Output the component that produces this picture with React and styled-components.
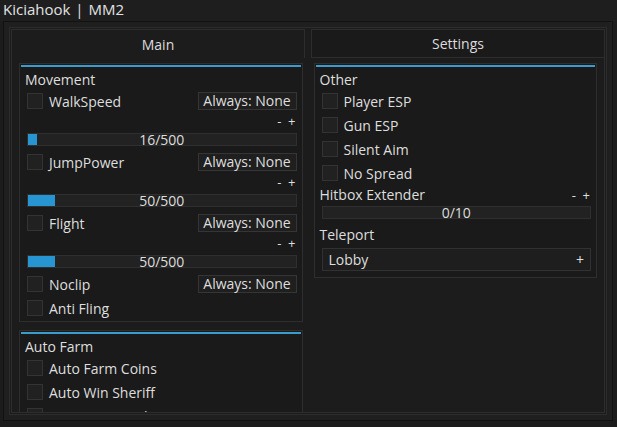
import styled, { createGlobalStyle } from 'styled-components';

const Global = createGlobalStyle`
  html, body { margin: 0; padding: 0; background: #1c1c1c; }
  body { font-family: "Open Sans", "Noto Sans", sans-serif; color: #dedede; }
  * { box-sizing: border-box; }
`;

const movement = [
  { type: 'toggle', label: 'WalkSpeed', bind: true },
  { type: 'keys' },
  { type: 'slider', value: 16, max: 500 },
  { type: 'toggle', label: 'JumpPower', bind: true },
  { type: 'keys' },
  { type: 'slider', value: 50, max: 500 },
  { type: 'toggle', label: 'Flight', bind: true },
  { type: 'keys' },
  { type: 'slider', value: 50, max: 500 },
  { type: 'toggle', label: 'Noclip', bind: true },
  { type: 'toggle', label: 'Anti Fling' },
];

const autoFarm = [
  { type: 'toggle', label: 'Auto Farm Coins' },
  { type: 'toggle', label: 'Auto Win Sheriff' },
  { type: 'toggle', label: 'Auto Win Murder' },
];

const other = [
  { type: 'toggle', label: 'Player ESP' },
  { type: 'toggle', label: 'Gun ESP' },
  { type: 'toggle', label: 'Silent Aim' },
  { type: 'toggle', label: 'No Spread' },
  { type: 'label', label: 'Hitbox Extender', keys: true },
  { type: 'slider', value: 0, max: 10, tight: true },
  { type: 'label', label: 'Teleport', spaced: true },
  { type: 'dropdown', value: 'Lobby' },
];

function Item({ item }) {
  if (item.type === 'toggle') {
    return (
      <ToggleRow>
        <Check />
        <Label>{item.label}</Label>
        {item.bind && <Bind>Always: None</Bind>}
      </ToggleRow>
    );
  }
  if (item.type === 'keys') {
    return <KeysRow>-&nbsp;&nbsp;+</KeysRow>;
  }
  if (item.type === 'slider') {
    return (
      <SliderRow tight={item.tight}>
        <Track>
          <Fill style={{ width: `${(item.value / item.max) * 100}%` }} />
          <TrackText>{item.value}/{item.max}</TrackText>
        </Track>
      </SliderRow>
    );
  }
  if (item.type === 'label') {
    return (
      <LabelRow spaced={item.spaced}>
        <span>{item.label}</span>
        {item.keys && <Keys>-&nbsp;&nbsp;+</Keys>}
      </LabelRow>
    );
  }
  return (
    <DropRow>
      <Drop>
        <span>{item.value}</span>
        <span>+</span>
      </Drop>
    </DropRow>
  );
}

function Section({ title, items }) {
  return (
    <Panel>
      <Title>{title}</Title>
      {items.map((it, i) => <Item key={i} item={it} />)}
    </Panel>
  );
}

export default function App() {
  return (
    <Window>
      <Global />
      <TitleBar>Kiciahook | MM2</TitleBar>
      <Frame>
        <Inner>
          <Tabs>
            <Tab active>Main</Tab>
            <Tab>Settings</Tab>
          </Tabs>
          <Content>
            <Column>
              <Section title="Movement" items={movement} />
              <Section title="Auto Farm" items={autoFarm} />
            </Column>
            <Column>
              <Section title="Other" items={other} />
            </Column>
          </Content>
        </Inner>
      </Frame>
    </Window>
  );
}

const Window = styled.div`
  width: 617px;
  height: 427px;
  background: #1c1c1c;
  display: flex;
  flex-direction: column;
  overflow: hidden;
`;

const TitleBar = styled.div`
  height: 21px;
  padding-left: 3px;
  font-size: 15px;
  line-height: 19px;
  color: #e2e2e2;
  background: #1e1e1e;
  word-spacing: 1px;
`;

const Frame = styled.div`
  margin-left: 3px;
  width: 610px;
  height: 400px;
  border: 1px solid #121212;
  background: #1f1f1f;
  padding: 5px;
`;

const Inner = styled.div`
  height: 100%;
  border: 1px solid #2c2c2c;
  background: #1c1c1c;
  padding: 1px;
  display: flex;
  flex-direction: column;
`;

const Tabs = styled.div`
  display: flex;
  gap: 6px;
  height: 29px;
`;

const Tab = styled.div`
  flex: 1;
  display: flex;
  align-items: center;
  justify-content: center;
  font-size: 14px;
  color: #dcdcdc;
  background: ${p => (p.active ? '#1c1c1c' : '#1a1a1a')};
  border: 1px solid #2d2d2d;
  border-bottom: ${p => (p.active ? 'none' : '1px solid #2d2d2d')};
`;

const Content = styled.div`
  flex: 1;
  display: flex;
  gap: 11px;
  padding: 5px 7px 0 7px;
  border: 1px solid #2d2d2d;
  border-top: none;
  overflow: hidden;
  min-height: 0;
`;

const Column = styled.div`
  flex: 1;
  display: flex;
  flex-direction: column;
  gap: 8px;
  min-width: 0;
`;

const Panel = styled.div`
  background: #1a1a1a;
  border: 1px solid #2e2e2e;
  padding: 1px 5px 1px 7px;
  position: relative;
  flex-shrink: 0;

  &::before {
    content: '';
    display: block;
    height: 2px;
    margin: 0 -4px 0 -6px;
    background: #3a9ccd;
  }
`;

const Title = styled.div`
  font-size: 14px;
  line-height: 19px;
  margin: 3px 0 0 -2px;
`;

const ToggleRow = styled.div`
  height: 24px;
  display: flex;
  align-items: center;
`;

const Check = styled.div`
  width: 16px;
  height: 16px;
  background: #212121;
  border: 1px solid #333;
`;

const Label = styled.span`
  font-size: 14px;
  margin-left: 6px;
  flex: 1;
`;

const Bind = styled.div`
  width: 99px;
  height: 18px;
  border: 1px solid #353535;
  background: #1f1f1f;
  font-size: 14px;
  line-height: 16px;
  text-align: center;
`;

const KeysRow = styled.div`
  height: 16px;
  font-size: 13px;
  line-height: 16px;
  text-align: right;
  padding-right: 1px;
`;

const SliderRow = styled.div`
  height: ${p => (p.tight ? '16px' : '21px')};
  display: flex;
  align-items: center;
`;

const Track = styled.div`
  position: relative;
  flex: 1;
  height: 13px;
  background: #222;
  border: 1px solid #2f2f2f;
`;

const Fill = styled.div`
  height: 100%;
  background: #2795d1;
`;

const TrackText = styled.span`
  position: absolute;
  inset: 0;
  display: flex;
  align-items: center;
  justify-content: center;
  font-size: 14px;
`;

const LabelRow = styled.div`
  height: 19px;
  margin-top: ${p => (p.spaced ? '5px' : '0')};
  display: flex;
  align-items: center;
  justify-content: space-between;
  font-size: 14px;
  margin-left: -2px;
`;

const Keys = styled.span`
  font-size: 13px;
  padding-right: 1px;
`;

const DropRow = styled.div`
  padding: 4px 0 5px;
`;

const Drop = styled.div`
  height: 23px;
  display: flex;
  align-items: center;
  justify-content: space-between;
  padding: 0 6px;
  background: #1e1e1e;
  border: 1px solid #313131;
  font-size: 14px;
`;
